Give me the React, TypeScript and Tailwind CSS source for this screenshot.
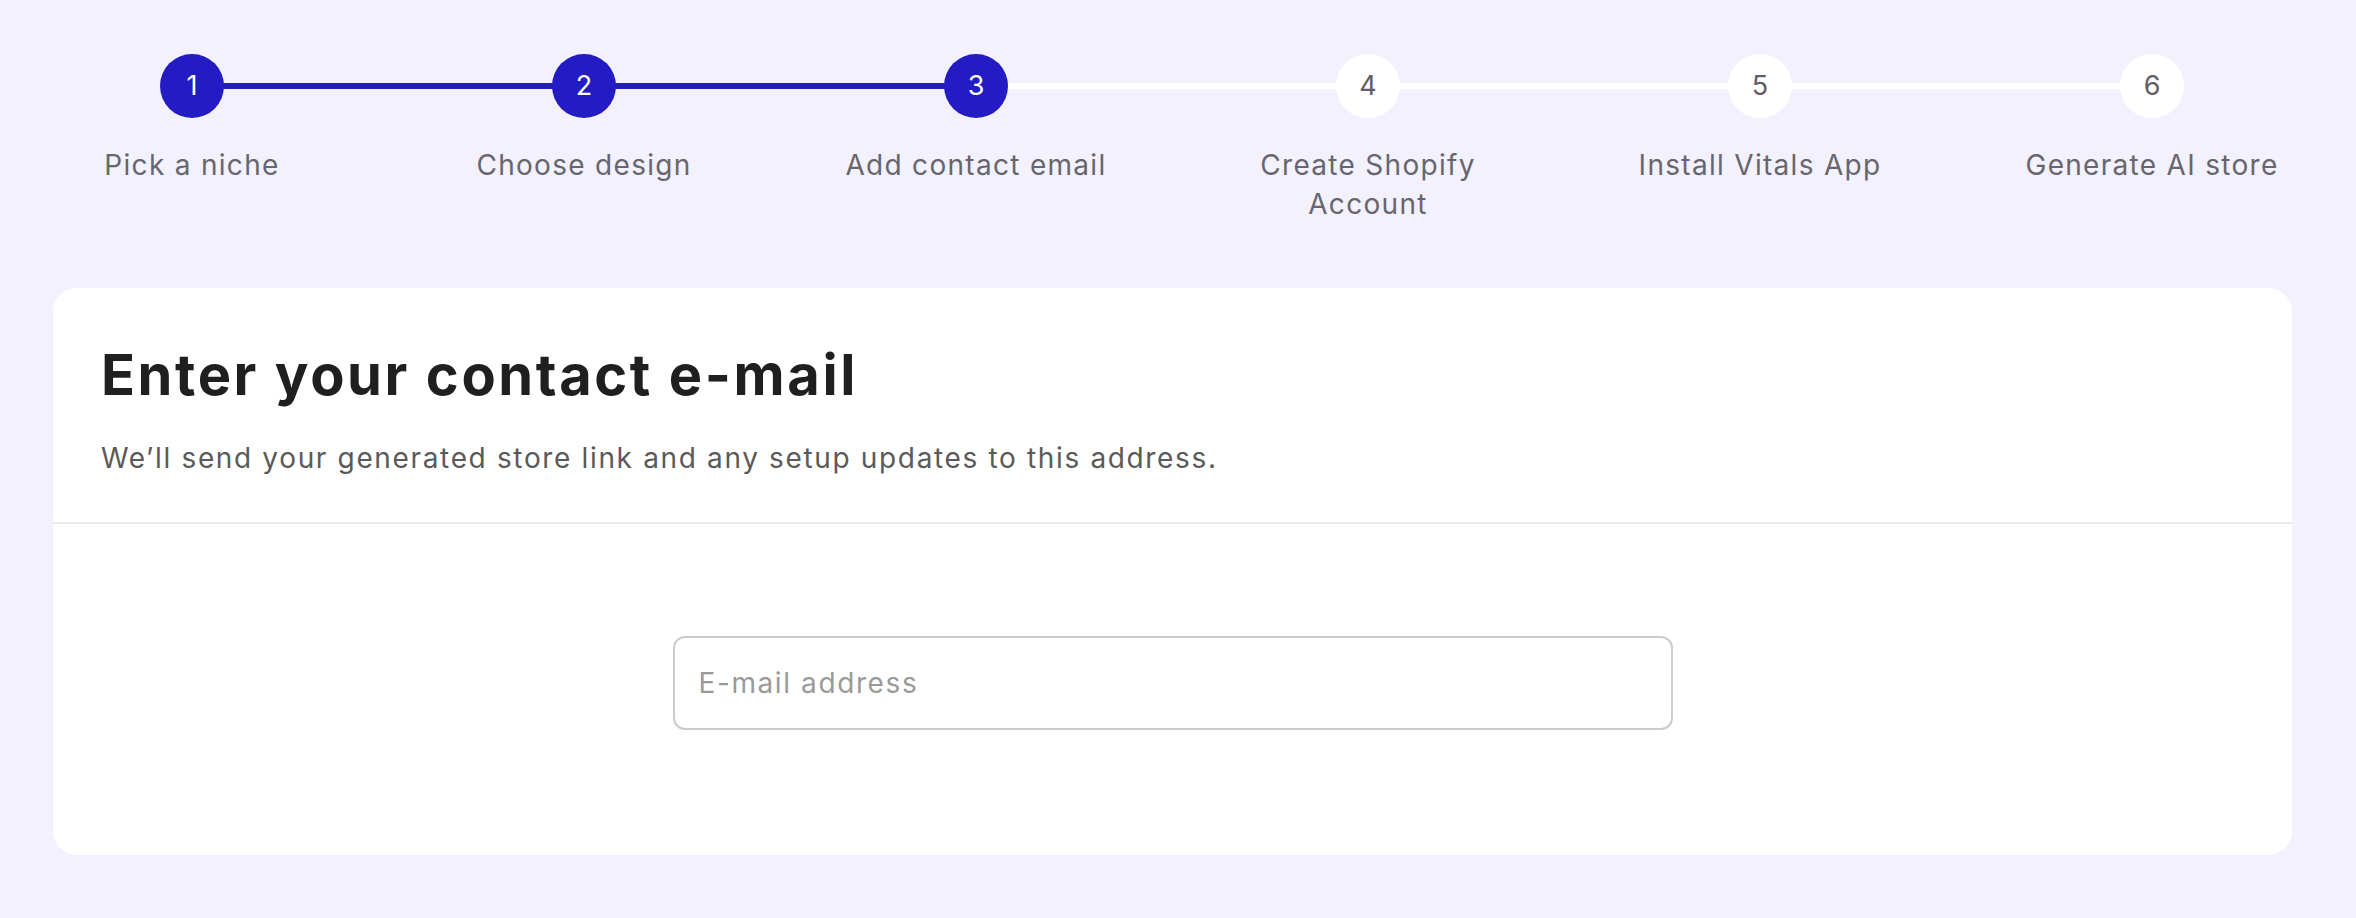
const steps: string[][] = [
  ["Pick a niche"],
  ["Choose design"],
  ["Add contact email"],
  ["Create Shopify", "Account"],
  ["Install Vitals App"],
  ["Generate AI store"],
];

export default function App() {
  return (
    <div className="min-h-screen w-full bg-[#f2f1fd] font-['Inter',sans-serif]">
      <div className="pt-[54px] -ml-[4px] w-[2352px] grid grid-cols-6">
        {steps.map((lines, i) => (
          <div key={i} className="relative flex flex-col items-center">
            {i < 5 && (
              <div
                className={
                  i < 2
                    ? "absolute top-[29px] left-1/2 w-full h-[6px] bg-[#231bc4]"
                    : "absolute top-[29px] left-1/2 w-full h-[6px] bg-white"
                }
              />
            )}
            <div
              className={
                i < 3
                  ? "relative z-10 w-[64px] h-[64px] rounded-full flex items-center justify-center text-[27px] bg-[#231bc4] text-white"
                  : "relative z-10 w-[64px] h-[64px] rounded-full flex items-center justify-center text-[27px] bg-white text-[#5f5e66]"
              }
            >
              {i + 1}
            </div>
            <div className="mt-[28px] text-center text-[28px] leading-[39px] tracking-[1.3px] text-[#67666e] whitespace-nowrap">
              {lines.map((l) => (
                <div key={l}>{l}</div>
              ))}
            </div>
          </div>
        ))}
      </div>

      <div className="mt-[64px] ml-[53px] w-[2239px] bg-white rounded-[24px] flex flex-col">
        <div className="px-[48px] pt-[53px] pb-[44px]">
          <h1 className="text-[56px] leading-[68px] font-bold tracking-[2.6px] text-[#1f1f1f]">
            Enter your contact e-mail
          </h1>
          <p className="mt-[29px] text-[28px] leading-[40px] tracking-[1.65px] text-[#5a5a5a]">
            We’ll send your generated store link and any setup updates to this address.
          </p>
        </div>
        <div className="h-[2px] bg-[#e9e9e9]" />
        <div className="pt-[112px] pb-[125px] flex justify-center">
          <input
            type="email"
            placeholder="E-mail address"
            className="w-[1000px] h-[94px] border-2 border-[#cccccc] rounded-[12px] px-[24px] text-[28px] tracking-[1.6px] text-[#333] placeholder:text-[#9a9a9a] outline-none bg-white"
          />
        </div>
      </div>
    </div>
  );
}
